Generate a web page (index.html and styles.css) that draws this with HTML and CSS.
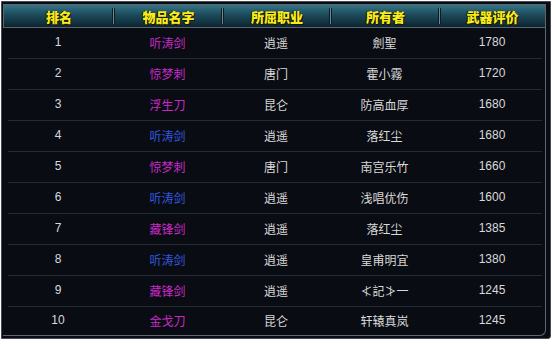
FILE: index.html
```html
<!DOCTYPE html>
<html lang="zh">
<head>
<meta charset="utf-8">
<title>武器排行</title>
<link rel="stylesheet" href="styles.css">
</head>
<body>
<div class="frame">
  <div class="head">
    <div class="hc">排名</div>
    <div class="hc sep">物品名字</div>
    <div class="hc sep">所屈职业</div>
    <div class="hc sep">所有者</div>
    <div class="hc sep">武器评价</div>
  </div>
  <div class="body">
    <div class="row"><span class="num">1</span><span class="mag">听涛剑</span><span>逍遥</span><span>劍聖</span><span class="num">1780</span></div>
    <div class="row"><span class="num">2</span><span class="mag">惊梦刺</span><span>唐门</span><span>霍小霧</span><span class="num">1720</span></div>
    <div class="row"><span class="num">3</span><span class="mag">浮生刀</span><span>昆仑</span><span>防高血厚</span><span class="num">1680</span></div>
    <div class="row"><span class="num">4</span><span class="blue">听涛剑</span><span>逍遥</span><span>落红尘</span><span class="num">1680</span></div>
    <div class="row"><span class="num">5</span><span class="mag">惊梦刺</span><span>唐门</span><span>南宫乐竹</span><span class="num">1660</span></div>
    <div class="row"><span class="num">6</span><span class="blue">听涛剑</span><span>逍遥</span><span>浅唱优伤</span><span class="num">1600</span></div>
    <div class="row"><span class="num">7</span><span class="mag">藏锋剑</span><span>逍遥</span><span>落红尘</span><span class="num">1385</span></div>
    <div class="row"><span class="num">8</span><span class="blue">听涛剑</span><span>逍遥</span><span>皇甫明宜</span><span class="num">1380</span></div>
    <div class="row"><span class="num">9</span><span class="mag">藏锋剑</span><span>逍遥</span><span>≮記≯一</span><span class="num">1245</span></div>
    <div class="row last"><span class="num">10</span><span class="mag">金戈刀</span><span>昆仑</span><span>轩辕真岚</span><span class="num">1245</span></div>
  </div>
</div>
</body>
</html>
```
FILE: styles.css
```css
body{
  margin:0;
  background:#ffffff;
  font-family:"Noto Sans CJK SC","Liberation Sans",sans-serif;
}
.frame{
  margin:1px 0 0 1px;
  width:550px;
  height:338px;
  box-sizing:border-box;
  background:#0a0c13;
  border:1px solid #464b54;
  border-radius:0 0 3px 0;
  padding:2px 4px 2px 1px;
}
.head{
  display:grid;
  grid-template-columns:110px 109px 108px 109px 1fr;
  height:24px;
  box-sizing:border-box;
  border:1px solid #5e656d;
  background:linear-gradient(#347587 0%,#1c4a5a 45%,#0c2431 100%);
}
.hc{
  position:relative;
  display:flex;
  align-items:center;
  justify-content:center;
  color:#f7ec1c;
  font-size:13px;
  font-weight:900;
  text-shadow:1px 1px 0 #1a1400,-1px 0 0 #1a1400;
}
.sep::before{
  content:"";
  position:absolute;
  left:-1px;
  top:3px;
  bottom:3px;
  width:1px;
  background:#6d8891;
  box-shadow:-1px 0 0 #0b1c24,1px 0 0 #0b1c24;
}
.body{
  border-right:1px solid #60656e;
  border-bottom:1px solid #60656e;
  border-radius:0 0 6px 0;
}
.row{
  display:grid;
  grid-template-columns:110px 109px 108px 109px 1fr;
  height:31px;
  align-items:center;
  position:relative;
  color:#d9d9d9;
  font-size:12px;
}
.row::after{
  content:"";
  position:absolute;
  left:5px;
  right:3px;
  bottom:0;
  height:1px;
  background:#262a32;
}
.row.last{height:28px}
.row.last::after{display:none}
.row span{text-align:center;padding-bottom:2px}
.row .num{
  font-family:"Liberation Sans","DejaVu Sans",sans-serif;
  font-size:12px;
  padding-bottom:3px;
}
.mag{color:#c62ac6}
.blue{color:#3357de}
```
